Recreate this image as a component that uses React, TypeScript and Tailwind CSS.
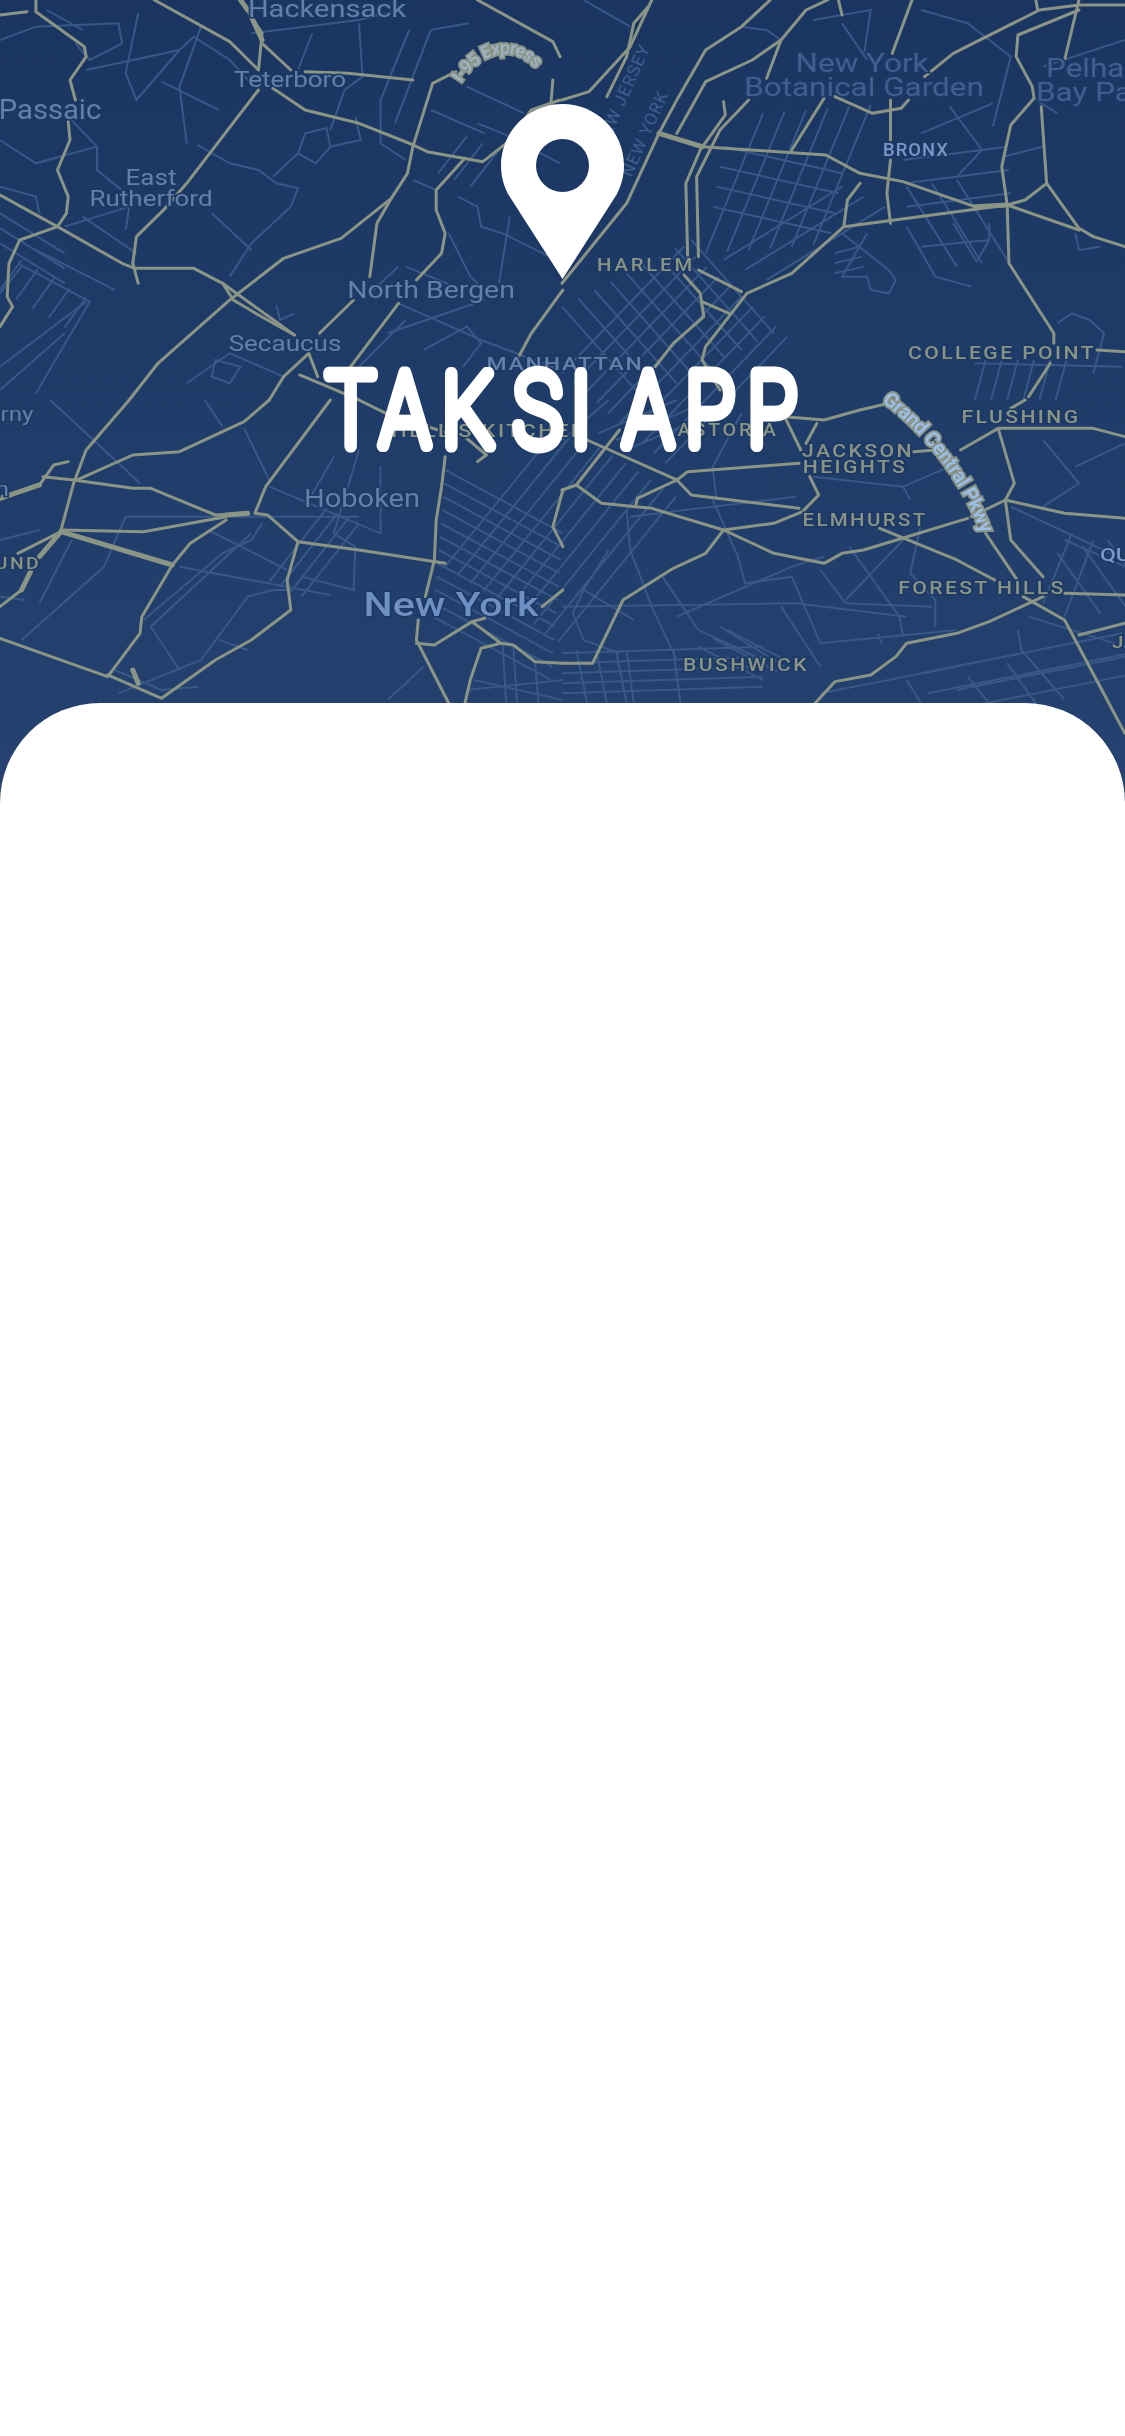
const MAJOR = "#8b9586";
const MINOR = "#385887";

// parallel streets, n copies of one line stepped by dx/dy
const lines = (x1: number, y1: number, x2: number, y2: number, dx: number, dy: number, n: number) =>
  Array.from({ length: n }, (_, i) => `M${x1 + dx * i},${y1 + dy * i} L${x2 + dx * i},${y2 + dy * i}`);

const quadrants = [
  {
    at: "translate(0,0) scale(0.359,0.3333)",
    minor: [
      "M0,120 L100,80 L330,70 L340,130 L250,180 L210,130", "M130,30 L230,90",
      "M385,40 L350,220 L380,300 L500,150 L540,110 L640,180 L700,250", "M240,210 L500,150",
      "M450,245 L610,330", "M560,80 L500,260 L520,430", "M190,350 L270,440 L270,510 L350,580 L400,600",
      "M0,420 L100,490 L270,440", "M0,560 L100,590 L110,640", "M50,790 L250,905 L100,1180",
      "M100,750 L320,870", "M60,800 L0,880", "M180,680 L360,620 L350,690", "M230,650 L380,760",
      "M550,435 L640,490 L720,510 L770,550 L830,565 L810,620 L700,730 L640,830",
      "M760,530 L830,460 L880,490 L920,440 L1005,420 L990,350", "M830,460 L850,400 L910,385 L920,440",
      "M590,640 L700,750", "M700,100 L1000,60 L1120,30", "M870,100 L830,210",
      "M1000,70 L1010,230 L960,270 L920,390", "M1140,90 L1060,300 L1060,430 L1130,480",
      "M1305,70 L1200,90 L1100,370", "M1200,330 L1350,400", "M1300,260 L1460,340",
      "M1330,370 L1400,400 L1560,490", "M1150,540 L1215,570",
      "M1275,590 L1330,620 L1340,680 L1400,700 L1568,790", "M1420,650 L1390,850",
      "M1250,700 L1310,830 L1360,880", "M1110,800 L1030,880", "M1130,800 L1290,870",
      "M1110,910 L1340,1020 L1560,1110", "M1080,1000 L1350,900", "M1000,1100 L1130,960",
      "M1180,1050 L1300,980 L1340,1030 L1290,1100", "M600,1080 L670,1100 L640,1150 L590,1130 Z",
      "M520,1150 L640,1060 L790,1130", "M770,915 L780,960 L820,940", "M0,1100 L240,905", "M180,1000 L0,1170",
      ...lines(60,780,0,870,45,28,5), ...lines(0,640,180,760,0,45,3), ...lines(1300,410,1220,520,45,20,3),
    ],
    major: [
      "M100,0 L100,35 L235,140 L240,170 L195,240 L210,300",
      "M190,365 L195,420 L160,510 L190,590 L185,640 L160,680 L55,720 L25,790 L20,890 L35,920 L0,980",
      "M0,585 L160,680 L340,790 L375,805", "M370,790 L385,850", "M375,805 L540,805 L620,850 L820,1005",
      "M620,850 L650,900 L720,945 L820,1005",
      "M360,1200 L440,1090 L640,900 L790,775 L950,715 L1090,595 L1135,520 L1150,440 L1205,250 L1270,215",
      "M1090,595 L1050,670 L1030,830", "M985,900 L890,1000", "M860,1060 L790,1130 L750,1200",
      "M1110,910 L970,1110", "M860,1060 L885,1130", "M835,1125 L1000,1200",
      "M720,270 L520,550 L460,625 L380,710 L370,790", "M430,0 L640,125 L720,210 L730,100 L700,50 L670,0",
      "M730,130 L810,210", "M850,215 L970,220 L1150,240",
      "M760,265 L850,330 L1000,370 L1145,432 L1190,455 L1345,485 L1410,430 L1480,330 L1560,300",
      "M1295,475 L1215,570 L1215,630 L1240,700 L1230,760 L1160,840", "M1330,0 L1540,125 L1560,170",
      "M1540,240 L1535,305", "M0,45 L75,35",
      "M1568,870 L1480,1000 L1440,1080",
    ],
    thick: ["M700,50 L730,120", "M670,0 L690,30"],
  },
  {
    at: "translate(562,0) scale(0.359,0.3333)",
    minor: [
      "M60,0 L190,80", "M500,80 L570,90 L610,120", "M700,60 L860,30 L840,170", "M780,70 L850,180",
      "M1130,70 L1250,170 L1200,380", "M1000,30 L1130,70", "M1000,400 L1200,310",
      "M1080,320 L1170,450 L1100,530", "M1320,300 L1380,340", "M1230,470 L1340,440", "M1340,200 L1568,120",
      "M1430,700 L1440,750 L1500,740", "M850,700 L780,830 L850,830 L860,870 L910,880 L930,840 L910,810 L780,700",
      "M760,760 L830,740", "M760,790 L835,770", "M760,820 L840,800",
      "M960,680 L1040,830 L1140,860", "M1190,670 L1190,720 L1155,785 L1090,670", "M1000,740 L1190,720",
      "M1380,970 L1420,940 L1470,960 L1510,1000 L1480,1120", "M1150,1090 L1560,1100",
      ...lines(400,760,560,340,60,-5,6), ...lines(420,620,750,700,10,-60,4),
      ...lines(450,780,780,560,60,30,3),
      ...lines(960,560,1100,800,70,-10,3), ...lines(950,480,1240,440,5,70,3),
      ...lines(0,1120,340,740,32,30,10), ...lines(0,920,230,1200,45,-25,9),
      ...lines(1150,1200,1180,1080,45,0,6),
    ],
    major: [
      "M250,0 L190,140 L75,275 L0,300", "M240,20 L200,70 L180,170 L125,290",
      "M580,0 L500,80 L400,150 L325,290 L270,400", "M270,400 L390,440 L735,465 L830,520 L950,545 L1150,620 L1240,615",
      "M270,400 L180,610 L0,850", "M740,0 L680,30 L610,120 L570,235", "M610,120 L530,180 L400,245 L320,400",
      "M450,305 L455,345 L385,450 L345,550 L350,770", "M520,300 L440,390 L375,530 L380,770",
      "M730,295 L640,450", "M975,0 L920,160", "M770,0 L780,45", "M760,290 L865,340 L945,325 L965,300",
      "M915,300 L915,420", "M915,480 L905,580 L915,670", "M1010,230 L1090,160 L1330,30 L1440,15 L1568,15",
      "M1320,0 L1325,30", "M1440,0 L1400,180",
      "M1440,30 L1270,105 L1265,170 L1310,260 L1315,295 L1250,375 L1225,500 L1240,615 L1245,790 L1370,1000 L1370,1030",
      "M1240,615 L1290,600 L1350,550 L1335,320", "M1350,550 L1440,685 L1480,710 L1568,740", "M1240,615 L1440,690",
      "M830,550 L795,600 L785,680 L640,820 L515,880 L400,1040 L390,1080 L440,1170", "M785,680 L1240,615",
      "M380,810 L500,875", "M340,825 L385,880 L395,950 L310,1030 L260,1100", "M390,905 L465,940",
      "M1490,1050 L1568,1055", "M1360,1090 L1300,1190",
    ],
    thick: ["M270,400 L390,440", "M1150,620 L1240,615"],
  },
  {
    at: "translate(0,400) scale(0.359,0.3333)",
    minor: [
      "M140,0 L390,250", "M680,85 L750,240", "M570,0 L620,80", "M750,260 L1060,400 L1060,200", "M930,170 L860,300",
      "M1000,150 L930,400 L990,440 L985,570 L840,530", "M350,350 L1000,350", "M350,350 L290,500 L60,720",
      "M500,500 L920,585", "M700,400 L420,680 L500,810", "M580,390 L800,510", "M730,370 L700,420 L620,460 L400,660",
      "M690,590 L760,570 L800,570", "M690,590 L560,780 L330,880", "M610,720 L690,750", "M320,810 L450,870 L550,860",
      "M70,600 L0,590", "M0,420 L110,390", "M110,610 L200,420", "M1080,900 L1180,800",
      "M1320,840 L1568,900", "M1300,870 L1568,840", "M1400,730 L1410,910", "M1430,740 L1440,910", "M1490,780 L1500,910",
      ...lines(1240,500,1568,65,35,25,10), ...lines(1240,210,1568,400,-3,40,12),
      ...lines(840,590,1000,370,-30,-15,4),
    ],
    major: [
      "M360,0 L240,150 L205,250 L170,390", "M205,240 L370,265 L420,265 L600,345 L690,340",
      "M215,240 L370,165 L500,155 L680,65 L750,0", "M170,390 L400,395 L630,350", "M170,395 L480,495",
      "M170,395 L50,460", "M85,515 L60,570 L0,620", "M480,495 L395,650 L390,700 L300,830 L0,715",
      "M630,360 L530,430 L480,495", "M920,0 L740,260 L710,340 L745,345 L830,425 L1000,450 L1240,490",
      "M830,425 L800,540 L810,630 L700,720 L600,780 L450,895 L300,825", "M0,295 L110,255 L150,195 L190,185",
      "M120,230 L205,240", "M1240,170 L1230,260 L1215,360 L1210,480 L1185,590", "M1300,115 L1355,165 L1330,185",
      "M1165,660 L1160,720 L1250,910", "M1160,730 L1210,735 L1315,665 L1395,730 L1430,735 L1490,785 L1568,790",
      "M1395,730 L1340,745 L1310,840 L1295,910", "M1315,665 L1350,655", "M1568,270 L1540,380 L1568,440",
      "M1568,570 L1510,620", "M1000,0 L1075,40 L1250,100",
    ],
    thick: ["M170,395 L110,470", "M0,295 L110,255", "M85,515 L60,570", "M370,810 L385,850", "M170,395 L480,495", "M630,345 L690,340"],
  },
  {
    at: "translate(562,400) scale(0.359,0.3333)",
    minor: [
      "M130,450 L60,570 L30,640 L60,720 L160,760", "M60,570 L200,660", "M180,330 L190,450 L250,620 L320,780",
      "M280,530 L380,690 L560,780", "M0,620 L650,610 L960,650", "M320,650 L640,500 L730,470", "M440,680 L620,800",
      "M640,530 L720,730", "M420,300 L490,470 L510,550 L640,530", "M610,620 L720,800", "M720,730 L1100,690",
      "M880,700 L890,730", "M800,440 L940,650 L950,710", "M950,420 L790,600", "M720,510 L790,610 L1030,620",
      "M1000,370 L970,520 L1040,600 L1040,680", "M1420,400 L1340,610", "M1300,650 L1568,740", "M1080,200 L950,260 L970,300",
      "M1340,120 L1440,250 L1340,320", "M1250,320 L1568,480", "M1430,200 L1568,130", "M1400,420 L1568,500",
      "M1480,420 L1400,650", "M1270,690 L1280,750 L1400,900", "M1100,870 L1568,770", "M960,840 L1000,910",
      "M1130,830 L1190,910", "M1240,790 L1320,910", "M720,880 L1100,800", "M500,40 L420,200 L430,300",
      "M700,230 L950,260", "M190,350 L650,290", "M130,0 L0,120",
      ...lines(0,760,560,740,0,30,5), ...lines(40,750,70,910,55,0,3), ...lines(180,750,200,910,130,0,2),
      ...lines(460,690,640,790,-40,25,3),
      ...lines(1000,820,1560,700,20,60,3),
      ...lines(1380,460,1500,640,70,-20,3),
      ...lines(100,100,320,0,50,20,3),
    ],
    major: [
      "M620,50 L665,150", "M620,50 L730,60 L830,30 L910,10", "M680,130 L710,70",
      "M70,120 L320,240 L360,285 L660,325", "M660,190 L350,215 L320,240 L210,295 L205,320",
      "M0,270 L40,255 L110,310 L205,320 L250,325 L450,390 L590,460 L730,490 L780,460 L840,450 L1130,355",
      "M160,90 L40,255", "M690,230 L715,285 L670,335 L590,370 L450,390 L400,460 L310,505 L170,600 L85,790 L0,790",
      "M885,385 L1100,480 L1205,540", "M980,155 L1040,150", "M1110,150 L1215,85 L1320,85 L1480,85 L1568,110",
      "M1215,85 L1260,250 L1235,300 L1140,350", "M1235,300 L1400,340 L1568,355", "M1235,300 L1250,420 L1340,530",
      "M1180,400 L1265,535", "M1285,590 L1400,660 L1568,1000",
      "M1340,590 L1190,665 L1100,700 L960,730 L930,770 L860,825 L760,845 L705,910",
      "M1400,580 L1568,585", "M1440,705 L1568,670", "M1290,0 L1250,25",
    ],
  },
];

type Label = { t: string; x: number; y: number; size: number; fill?: string; bold?: boolean; track?: number; rotate?: number; anchor?: "start" | "middle"; sx?: number };

const LABEL = "#6380ab";
const CAPS = "#8a9485";
const FADED = "#3f5f8f";

const labels: Label[] = [
  { t: "Hackensack", x: 327, y: 17, size: 24 },
  { t: "Teterboro", x: 290, y: 87, size: 21.5 },
  { t: "Passaic", x: 50, y: 119, size: 27, sx: 1.08 },
  { t: "East", x: 151, y: 185, size: 21.5 },
  { t: "Rutherford", x: 151, y: 206, size: 21.5 },
  { t: "North Bergen", x: 431, y: 298, size: 23.5 },
  { t: "Secaucus", x: 285, y: 351, size: 21.5 },
  { t: "Hoboken", x: 362, y: 507, size: 25.5, sx: 1.14 },
  { t: "New York", x: 451, y: 616, size: 34, fill: "#6f90c3", bold: true },
  { t: "MANHATTAN", x: 565, y: 370, size: 19, bold: true, track: 1.5 },
  { t: "HELL'S KITCHEN", x: 490, y: 437, size: 18, fill: CAPS, bold: true, track: 2 },
  { t: "ASTORIA", x: 728, y: 436, size: 18, fill: CAPS, bold: true, track: 2.5, sx: 1.1 },
  { t: "HARLEM", x: 646, y: 271, size: 18, fill: CAPS, bold: true, track: 2.5, sx: 1.13 },
  { t: "BRONX", x: 916, y: 156, size: 17.5, fill: "#7b97c6", bold: true, track: 1, sx: 1.05 },
  { t: "New York", x: 862, y: 72, size: 26, fill: FADED },
  { t: "Botanical Garden", x: 864, y: 96, size: 26, fill: FADED },
  { t: "Pelham", x: 1046, y: 77, size: 26, fill: FADED, anchor: "start" },
  { t: "Bay Park", x: 1036, y: 101, size: 26, fill: FADED, anchor: "start" },
  { t: "COLLEGE POINT", x: 1002, y: 359, size: 17.5, fill: CAPS, bold: true, track: 2 },
  { t: "FLUSHING", x: 1021, y: 423, size: 17.5, fill: CAPS, bold: true, track: 2 },
  { t: "JACKSON", x: 858, y: 457, size: 17.5, fill: CAPS, bold: true, track: 2 },
  { t: "HEIGHTS", x: 855, y: 473, size: 17.5, fill: CAPS, bold: true, track: 2 },
  { t: "ELMHURST", x: 865, y: 526, size: 17.5, fill: CAPS, bold: true, track: 2, sx: 1.17 },
  { t: "FOREST HILLS", x: 982, y: 594, size: 17.5, fill: CAPS, bold: true, track: 2 },
  { t: "BUSHWICK", x: 746, y: 671, size: 17.5, fill: CAPS, bold: true, track: 2 },
  { t: "QU", x: 1100, y: 561, size: 19, fill: "#7b97c6", bold: true, anchor: "start" },
  { t: "J", x: 1112, y: 648, size: 17, fill: CAPS, bold: true, anchor: "start" },
  { t: "UND", x: 18, y: 569, size: 16, fill: CAPS, bold: true, track: 2 },
  { t: "rny", x: 17, y: 421, size: 20 },
  { t: "n", x: 2, y: 496, size: 21 },
  { t: "NEW JERSEY", x: 628, y: 98, size: 17, fill: FADED, rotate: -66, track: 1, sx: 1 },
  { t: "NEW YORK", x: 650, y: 136, size: 17, fill: FADED, rotate: -66, track: 1, sx: 1 },
];

function MapBackground() {
  return (
    <svg
      viewBox="0 0 1125 810"
      className="absolute top-0 left-0 h-[810px] w-full bg-linear-to-b from-[#1a3562] to-[#254270] blur-[0.5px]"
      fill="none"
    >
      <defs>
        <path id="gcp" d="M886,396 C925,425 965,470 990,536" />
        <path id="i95" d="M456,80 C480,42 526,30 554,86" />
      </defs>
      {quadrants.map((q) => (
        <g key={q.at} transform={q.at}>
          {q.minor.map((d) => (
            <path key={d} d={d} stroke={MINOR} strokeWidth={2} vectorEffect="non-scaling-stroke" />
          ))}
          {q.major.map((d) => (
            <path key={d} d={d} stroke={MAJOR} strokeWidth={3} strokeLinejoin="round" strokeLinecap="round" vectorEffect="non-scaling-stroke" />
          ))}
          {q.thick?.map((d) => (
            <path key={d} d={d} stroke={MAJOR} strokeWidth={5} strokeLinecap="round" vectorEffect="non-scaling-stroke" />
          ))}
        </g>
      ))}
      {labels.map((l) => (
        <text
          key={l.t + l.x}
          fontSize={l.size}
          fontWeight={l.bold ? 500 : 400}
          letterSpacing={l.track ?? 0}
          textAnchor={l.anchor ?? "middle"}
          fill={l.fill ?? LABEL}
          stroke="#1d3966"
          strokeWidth={3}
          paintOrder="stroke"
          transform={`translate(${l.x} ${l.y}) rotate(${l.rotate ?? 0}) scale(${l.sx ?? 1.21} 1)`}
          className="font-[Roboto,sans-serif]"
        >
          {l.t}
        </text>
      ))}
      <text fontSize={20} fontWeight={600} fill="#9cc0ee" stroke={MAJOR} strokeWidth={4} paintOrder="stroke" dy={7} textLength={172} className="font-[Roboto,sans-serif]">
        <textPath href="#gcp">Grand Central Pkwy</textPath>
      </text>
      <text fontSize={18} fontWeight={600} fill="#9fb2c6" stroke={MAJOR} strokeWidth={4} paintOrder="stroke" dy={6} className="font-[Roboto,sans-serif]">
        <textPath href="#i95">I-95 Express</textPath>
      </text>
    </svg>
  );
}

function Pin() {
  return (
    <svg width="123" height="175" viewBox="0 0 123 175">
      <path
        fillRule="evenodd"
        fill="#fff"
        d="M61.5,0 C27.5,0 0,27.5 0,61.5 C0,72 2.5,81 7,90 L61.5,175 L116,90 C120.5,81 123,72 123,61.5 C123,27.5 95.5,0 61.5,0 Z M61.5,35 A26.5,26.5 0 1 1 61.5,88 A26.5,26.5 0 1 1 61.5,35 Z"
      />
    </svg>
  );
}

// thin face with a fat round stroke, closest to the rounded logo type
function Title() {
  return (
    <h1 className="mt-[89px]">
      <svg width="480" height="84" viewBox="0 0 480 84" className="overflow-visible">
        <text
          x="4 72 149 238 309 340 376 453 531"
          y="78"
          fontSize="102"
          fontWeight="100"
          transform="scale(0.8 1)"
          fill="#fff"
          stroke="#fff"
          strokeWidth="13"
          strokeLinejoin="round"
          strokeLinecap="round"
          className="font-[Roboto,sans-serif]"
        >
          TAKSI APP
        </text>
      </svg>
    </h1>
  );
}

export default function App() {
  return (
    <div className="relative flex h-[2436px] flex-col overflow-hidden bg-white">
      <MapBackground />
      <div className="relative flex h-[703px] flex-col items-center pt-[104px]">
        <Pin />
        <Title />
      </div>
      <div className="relative flex-1 rounded-t-[100px] bg-white" />
    </div>
  );
}
